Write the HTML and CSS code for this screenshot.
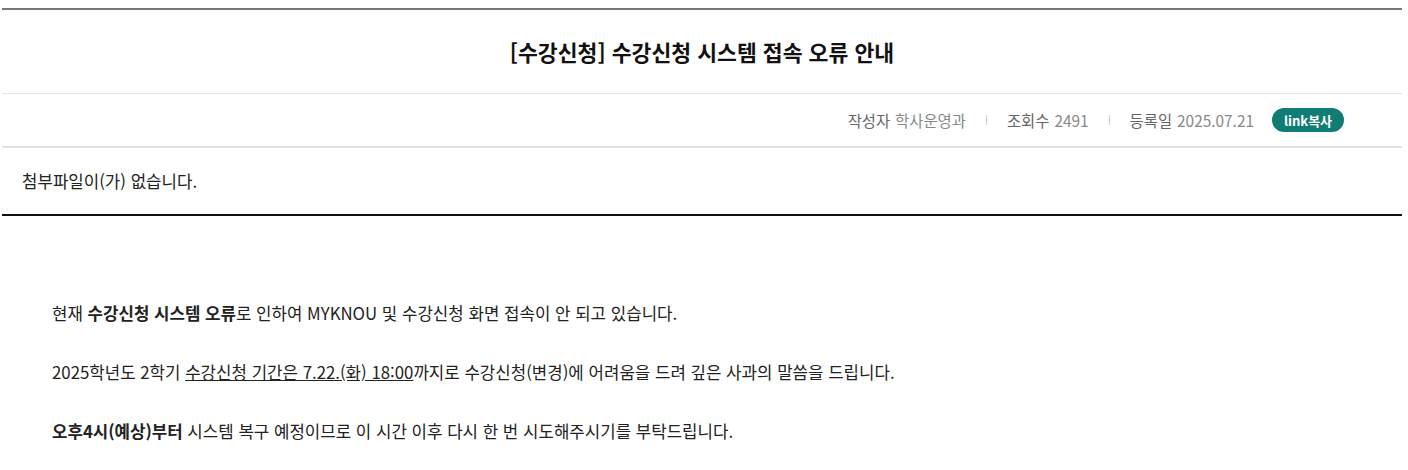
FILE: index.html
```html
<!DOCTYPE html>
<html lang="ko">
<head>
    <meta charset="UTF-8">
    <meta name="viewport" content="width=device-width, initial-scale=1.0">
    <title>수강신청 시스템 접속 오류 안내</title>
    <link rel="stylesheet" href="styles.css">
</head>
<body>
    <div class="board-view">
        <div class="view-head">
            <h2 class="view-title">[수강신청] 수강신청 시스템 접속 오류 안내</h2>
        </div>

        <div class="view-info">
            <dl>
                <dt>작성자</dt>
                <dd>학사운영과</dd>
            </dl>
            <span class="sep"></span>
            <dl>
                <dt>조회수</dt>
                <dd>2491</dd>
            </dl>
            <span class="sep"></span>
            <dl>
                <dt>등록일</dt>
                <dd>2025.07.21</dd>
            </dl>
            <button type="button" class="btn-link">link복사</button>
        </div>

        <div class="view-file">
            <p>첨부파일이(가) 없습니다.</p>
        </div>

        <div class="view-content">
            <p>현재 <strong>수강신청 시스템 오류</strong>로 인하여 MYKNOU 및 수강신청 화면 접속이 안 되고 있습니다.</p>
            <p>2025학년도 2학기 <u>수강신청 기간은 7.22.(화) 18:00</u>까지로 수강신청(변경)에 어려움을 드려 깊은 사과의 말씀을 드립니다.</p>
            <p><strong>오후4시(예상)부터</strong> 시스템 복구 예정이므로 이 시간 이후 다시 한 번 시도해주시기를 부탁드립니다.</p>
        </div>
    </div>
</body>
</html>
```

FILE: styles.css
```css
body {
    margin: 0;
    padding: 8px 0 0 2px;
    font-family: "Noto Sans CJK KR", "Noto Sans", sans-serif;
    color: #222;
    background: #fff;
}
.board-view {
    width: 1400px;
}
.view-head {
    border-top: 2px solid #777;
    border-bottom: 1px solid #e5e5e5;
    height: 83px;
    display: flex;
    align-items: center;
    justify-content: center;
}
.view-title {
    margin: 0;
    font-size: 21.6px;
    font-weight: bold;
    color: #111;
}
.view-info {
    height: 52px;
    border-bottom: 2px solid #e2e2e2;
    display: flex;
    align-items: center;
    justify-content: flex-end;
    padding-right: 58px;
    font-size: 15.4px;
}
.view-info dl {
    display: flex;
    gap: 5px;
    margin: 0;
}
.view-info dt {
    color: #666;
}
.view-info dd {
    margin: 0;
    color: #888;
}
.sep {
    width: 1px;
    height: 10px;
    background: #ccc;
    margin: 0 20px;
}
.btn-link {
    margin-left: 18px;
    height: 24px;
    width: 72px;
    border: 0;
    border-radius: 12px;
    background: #0f7d74;
    color: #fff;
    font-family: inherit;
    font-size: 13px;
    font-weight: bold;
    padding: 0;
}
.view-file {
    height: 66px;
    border-bottom: 2px solid #111;
    display: flex;
    align-items: center;
    padding-left: 20px;
}
.view-file p {
    margin: 0;
    font-size: 16.8px;
}
.view-content {
    padding: 85px 0 0 50px;
    font-size: 16.8px;
}
.view-content p {
    margin: 0 0 35px;
    line-height: 24px;
}
.view-content strong {
    font-weight: bold;
}
```
